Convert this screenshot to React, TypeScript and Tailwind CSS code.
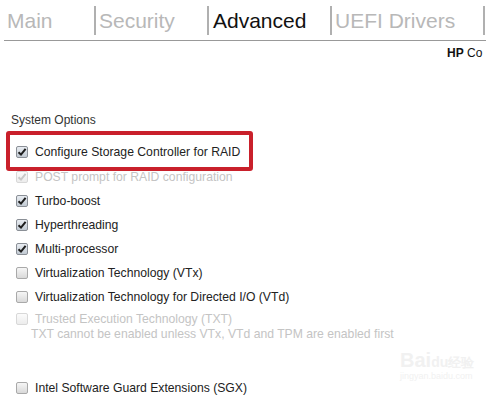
import React from "react";

type Opt = { label: string; checked?: boolean; disabled?: boolean };

const options: Opt[] = [
  { label: "POST prompt for RAID configuration", checked: true, disabled: true },
  { label: "Turbo-boost", checked: true },
  { label: "Hyperthreading", checked: true },
  { label: "Multi-processor", checked: true },
  { label: "Virtualization Technology (VTx)" },
  { label: "Virtualization Technology for Directed I/O (VTd)" },
];

function Box({ checked, disabled }: { checked?: boolean; disabled?: boolean }) {
  return (
    <span
      className={
        "flex items-center justify-center w-[12px] h-[12px] shrink-0 rounded-[2px] border " +
        (disabled
          ? "border-[#d8d8d8] bg-gradient-to-b from-[#fbfbfb] to-[#ececec]"
          : checked
          ? "border-[#8a8f96] bg-gradient-to-b from-[#e9edf2] to-[#c2cad3]"
          : "border-[#a9a9a9] bg-gradient-to-b from-[#f6f6f6] to-[#d9d9d9]")
      }
    >
      {checked && (
        <svg width="10" height="10" viewBox="0 0 10 10">
          <path
            d="M1.5 5.2 L4 7.6 L8.6 1.8"
            fill="none"
            stroke={disabled ? "#c8c8c8" : "#1e1e1e"}
            strokeWidth="2"
          />
        </svg>
      )}
    </span>
  );
}

function Row({ o }: { o: Opt }) {
  return (
    <div className="flex items-center gap-[7px] h-[24px] pl-[16px]">
      <Box checked={o.checked} disabled={o.disabled} />
      <span className={o.disabled ? "text-[#c4c4c4]" : "text-[#222]"}>{o.label}</span>
    </div>
  );
}

export default function App() {
  return (
    <div
      className="relative w-[486px] h-[406px] overflow-hidden bg-white text-[12.2px]"
      style={{ fontFamily: '"Liberation Sans", Arial, sans-serif' }}
    >
      {/* tabs */}
      <div className="flex h-[40px] pt-[6px] text-[21px] leading-[29px]">
        <div className="w-[94px] h-[29px] pl-[7px] text-[#b8b8b8]">Main</div>
        <div className="w-[113px] h-[29px] pl-[3px] border-l-2 border-[#b0b0b0] text-[#b8b8b8]">Security</div>
        <div className="w-[123px] h-[29px] pl-[4px] border-l-2 border-[#b0b0b0] text-[#111]">Advanced</div>
        <div className="w-[153px] h-[29px] pl-[3px] border-l-2 border-[#b0b0b0] text-[#b8b8b8] whitespace-nowrap">UEFI Drivers</div>
        <div className="h-[29px] border-l-2 border-[#b0b0b0]" />
      </div>
      <div className="ml-[4px] h-px bg-[#999]" />
      <div className="pl-[447px] pt-[5px] text-[12px] leading-[14px] text-[#111] whitespace-nowrap">
        <b>HP</b> Co
      </div>

      <div className="mt-[52px] pl-[11px] text-[12px] leading-[16px] text-[#333]">System Options</div>

      <div className="mt-[12px]">
        <div className="relative">
          <Row o={{ label: "Configure Storage Controller for RAID", checked: true }} />
          <div className="absolute left-[6px] top-[-9px] w-[247px] h-[40px] rounded-[3px] border-4 border-[#c9202b] z-10" />
        </div>
        <div className="pt-[1px]">
          {options.map((o) => (
            <Row key={o.label} o={o} />
          ))}
        </div>
        <div className="pl-[16px] pt-[2px]">
          <div className="flex items-center gap-[7px] h-[16px]">
            <Box disabled />
            <span className="text-[#c4c4c4]">Trusted Execution Technology (TXT)</span>
          </div>
          <div className="pl-[15px] h-[15px] leading-[15px] text-[#c4c4c4] whitespace-nowrap">
            TXT cannot be enabled unless VTx, VTd and TPM are enabled first
          </div>
        </div>
        <div className="mt-[34px]">
          <Row o={{ label: "Intel Software Guard Extensions (SGX)" }} />
        </div>
      </div>

      {/* watermark */}
      <div className="absolute left-[400px] top-[350px] text-[#f1f1f1] leading-none">
        <div className="text-[20px] font-bold">Bai<span className="text-[14px]">du</span><span className="text-[13px]">经验</span></div>
        <div className="text-[9px] mt-[2px]">jingyan.baidu.com</div>
      </div>
    </div>
  );
}
